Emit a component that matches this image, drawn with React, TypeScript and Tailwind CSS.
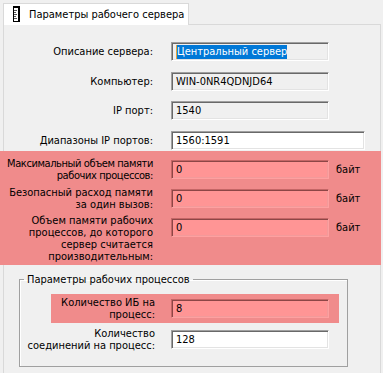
import React from 'react';

type BoxProps = {
  value: string;
  width?: string;
  tone?: 'ro' | 'white' | 'pink';
  selected?: boolean;
};

// sunken Win32-style edit box
function Box({ value, width = 'w-[158px]', tone = 'ro', selected = false }: BoxProps) {
  const skin =
    tone === 'pink'
      ? 'bg-[#ff9595] border-t-[#c46666] border-l-[#c46666] border-b-[#ffa0a0] border-r-[#ffa0a0] shadow-[inset_1px_1px_0_#8c4646,inset_-1px_-1px_0_#f29a9a]'
      : `${tone === 'white' ? 'bg-white' : 'bg-[#f0f0f0]'} border-t-[#a0a0a0] border-l-[#a0a0a0] border-b-white border-r-white shadow-[inset_1px_1px_0_#696969,inset_-1px_-1px_0_#e3e3e3]`;
  return (
    <div className={`${width} h-[19px] shrink-0 border flex items-center pl-[4px] ${skin}`}>
      {selected ? (
        <span className="bg-[#0078d7] text-white leading-[14px] border-l border-[#e9a23b]">{value}</span>
      ) : (
        <span className="leading-[14px]">{value}</span>
      )}
    </div>
  );
}

// right-aligned label, long lines spill to the left instead of wrapping
function Label({ lines, width, extra = '' }: { lines: string[]; width: string; extra?: string }) {
  return (
    <div className={`${width} shrink-0 flex flex-col items-end leading-[12px] ${extra}`}>
      {lines.map(l => (
        <span key={l} className="whitespace-nowrap">{l}</span>
      ))}
    </div>
  );
}

function TabIcon() {
  return (
    <svg width="7" height="16" viewBox="0 0 7 16" className="shrink-0">
      <rect x="0.5" y="0.5" width="6" height="15" fill="#fff" stroke="#000" />
      <rect x="0" y="0" width="7" height="2" fill="#000" />
      <rect x="5" y="0" width="2" height="16" fill="#000" />
      <line x1="1" y1="4.5" x2="4" y2="4.5" stroke="#555" />
      <line x1="1" y1="6.5" x2="3" y2="6.5" stroke="#555" />
      <line x1="1" y1="8.5" x2="4" y2="8.5" stroke="#555" />
      <line x1="1" y1="10.5" x2="3" y2="10.5" stroke="#555" />
      <line x1="1" y1="12.5" x2="4" y2="12.5" stroke="#555" />
    </svg>
  );
}

export default function App() {
  return (
    <div className="w-[383px] h-[373px] overflow-hidden bg-[#f0f0f0] text-black text-[11px] font-['DejaVu_Sans',Tahoma,sans-serif] [font-stretch:condensed]">
      {/* tab strip */}
      <div className="h-[24px] pt-[3px] pl-[3px] flex">
        <div className="relative z-10 h-[22px] w-[186px] bg-white border border-b-0 border-[#d9d9d9] flex items-center pl-[9px] gap-[9px] pb-[1px]">
          <TabIcon />
          <span className="leading-[13px] pt-[1px] whitespace-nowrap">Параметры рабочего сервера</span>
        </div>
      </div>

      {/* page */}
      <div className="ml-[3px] w-[378px] h-[380px] border border-[#d9d9d9] bg-[#f0f0f0]">
        <div className="pt-[17px]">
          <div className="flex items-center h-[19px]">
            <Label width="w-[149px]" lines={['Описание сервера:']} />
            <div className="ml-[18px]">
              <Box value="Центральный сервер" selected />
            </div>
          </div>
          <div className="flex items-center h-[19px] mt-[11px]">
            <Label width="w-[149px]" lines={['Компьютер:']} />
            <div className="ml-[18px]">
              <Box value="WIN-0NR4QDNJD64" />
            </div>
          </div>
          <div className="flex items-center h-[19px] mt-[10px]">
            <Label width="w-[149px]" lines={['IP порт:']} />
            <div className="ml-[18px]">
              <Box value="1540" />
            </div>
          </div>
          <div className="flex items-center h-[19px] mt-[11px]">
            <Label width="w-[149px]" lines={['Диапазоны IP портов:']} />
            <div className="ml-[18px]">
              <Box value="1560:1591" tone="white" width="w-[194px]" />
            </div>
          </div>
        </div>

        {/* memory limits, highlighted */}
        <div className="-ml-[4px] -mr-px mt-[1px] h-[114px] bg-[#f08b8b] pt-[9px]">
          <div className="flex items-center h-[19px]">
            <Label width="w-[153px]" extra="tracking-[-0.4px]" lines={['Максимальный объем памяти', 'рабочих процессов:']} />
            <div className="ml-[18px]">
              <Box value="0" tone="pink" />
            </div>
            <span className="ml-[7px] leading-[13px]">байт</span>
          </div>
          <div className="flex items-center h-[19px] mt-[10px]">
            <Label width="w-[153px]" lines={['Безопасный расход памяти', 'за один вызов:']} />
            <div className="ml-[18px]">
              <Box value="0" tone="pink" />
            </div>
            <span className="ml-[7px] leading-[13px]">байт</span>
          </div>
          <div className="flex items-start h-[19px] mt-[10px]">
            <div className="-mt-[3px]">
              <Label
                width="w-[153px]"
                lines={['Объем памяти рабочих', 'процессов, до которого', 'сервер считается', 'производительным:']}
              />
            </div>
            <div className="ml-[18px]">
              <Box value="0" tone="pink" />
            </div>
            <span className="ml-[7px] leading-[19px]">байт</span>
          </div>
        </div>

        {/* worker process group */}
        <fieldset className="ml-[15px] mt-[8px] w-[329px] h-[94px] border border-[#a0a0a0] shadow-[inset_1px_1px_0_#ffffff]">
          <legend className="ml-[4px] px-[3px] leading-[13px]">Параметры рабочих процессов</legend>
          <div className="ml-[31px] mt-[8px] w-[288px] h-[29px] bg-[#f08b8b] flex items-center">
            <Label width="w-[104px]" lines={['Количество ИБ на', 'процесс:']} />
            <div className="ml-[16px]">
              <Box value="8" tone="pink" />
            </div>
          </div>
          <div className="flex items-center h-[19px] mt-[7px]">
            <Label width="w-[135px]" lines={['Количество', 'соединений на процесс:']} />
            <div className="ml-[16px]">
              <Box value="128" tone="white" />
            </div>
          </div>
        </fieldset>
      </div>
    </div>
  );
}
